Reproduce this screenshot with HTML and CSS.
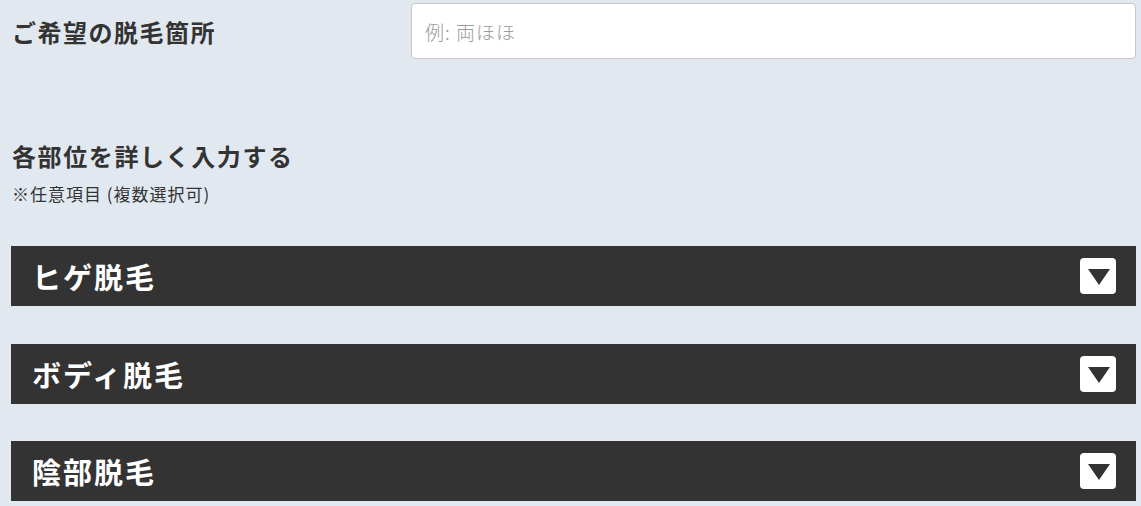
FILE: index.html
```html
<!DOCTYPE html>
<html lang="ja">
<head>
<meta charset="utf-8">
<link rel="stylesheet" href="styles.css">
</head>
<body>
<div class="page">
  <div class="field-row">
    <div class="field-label">ご希望の脱毛箇所</div>
    <div class="field-input"><input type="text" placeholder="例: 両ほほ"></div>
  </div>

  <div class="section-head">
    <div class="section-title">各部位を詳しく入力する</div>
    <div class="section-note">※任意項目 (複数選択可)</div>
  </div>

  <div class="accordions">
    <div class="acc-bar">
      <span class="acc-title">ヒゲ脱毛</span>
      <span class="acc-toggle"><svg viewBox="0 0 36 36" width="36" height="36"><polygon points="8,11 30,11 19,27" fill="#333"/></svg></span>
    </div>
    <div class="acc-bar">
      <span class="acc-title">ボディ脱毛</span>
      <span class="acc-toggle"><svg viewBox="0 0 36 36" width="36" height="36"><polygon points="8,11 30,11 19,27" fill="#333"/></svg></span>
    </div>
    <div class="acc-bar">
      <span class="acc-title">陰部脱毛</span>
      <span class="acc-toggle"><svg viewBox="0 0 36 36" width="36" height="36"><polygon points="8,11 30,11 19,27" fill="#333"/></svg></span>
    </div>
  </div>
</div>
</body>
</html>
```

FILE: styles.css
```css
html, body {
  margin: 0;
  padding: 0;
  background: #e1e8f0;
}
body {
  font-family: "Noto Sans CJK JP", "Noto Sans", sans-serif;
  color: #333;
}
.page {
  padding: 3px 5px 0 11px;
}
.field-row {
  display: flex;
  align-items: center;
  height: 56px;
}
.field-label {
  width: 399px;
  font-size: 24px;
  font-weight: bold;
  letter-spacing: 1.5px;
  padding-left: 1px;
  color: #333;
}
.field-input {
  flex: 1;
  height: 100%;
}
.field-input input {
  box-sizing: border-box;
  width: 100%;
  height: 100%;
  border: 1px solid #c8c8c8;
  border-radius: 4px;
  background: #fff;
  padding: 0 13px;
  font-family: "Noto Sans CJK JP", sans-serif;
  font-size: 19px;
  letter-spacing: 1px;
  color: #333;
  outline: none;
}
.field-input input::placeholder {
  color: #9a9a9a;
  font-weight: 300;
}
.section-head {
  margin-top: 80px;
}
.section-title {
  font-size: 24px;
  line-height: 34px;
  font-weight: bold;
  letter-spacing: 1.6px;
  padding-left: 1px;
}
.section-note {
  margin-top: 9px;
  font-size: 17px;
  line-height: 24px;
  letter-spacing: 1px;
  padding-left: 1px;
}
.accordions {
  margin-top: 40px;
  display: flex;
  flex-direction: column;
  gap: 37.5px;
}
.acc-bar {
  height: 60px;
  background: #333;
  display: flex;
  align-items: center;
  justify-content: space-between;
  padding: 0 20px 0 21px;
}
.acc-title {
  color: #fff;
  font-size: 29px;
  font-weight: bold;
  letter-spacing: 2px;
}
.acc-toggle {
  width: 36px;
  height: 36px;
  background: #fff;
  border-radius: 4px;
  display: flex;
}
```
